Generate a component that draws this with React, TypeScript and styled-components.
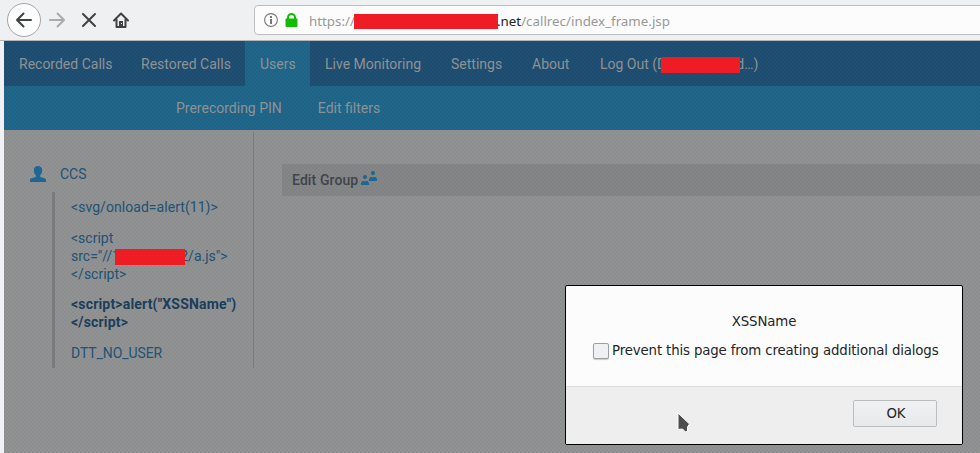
import React from "react";
import styled, { createGlobalStyle } from "styled-components";

const GlobalStyle = createGlobalStyle`
  * { box-sizing: border-box; }
  body { margin: 0; overflow: hidden; background: #eff1f5; }
`;

const Window = styled.div`
  position: relative;
  width: 980px;
  height: 453px;
  overflow: hidden;
  display: flex;
  flex-direction: column;
  background: #eff1f5;
  font: 14px/18px Roboto, sans-serif;
`;

const BrowserBar = styled.header`
  flex: none;
  height: 41px;
  display: flex;
  align-items: flex-start;
  background: #eff0f2;
  border-bottom: 1px solid #b4b6b7;
`;

const BrowserButtons = styled.div`
  width: 254px;
  height: 40px;
  flex: none;
  svg { display: block; }
`;

const AddressBar = styled.div`
  flex: none;
  width: 740px;
  height: 30px;
  margin-top: 5px;
  padding-left: 9px;
  display: flex;
  align-items: center;
  background: #fcfcfc;
  border: 1px solid #bcbebf;
  border-radius: 4px;
  svg { flex: none; }
`;

const Url = styled.div`
  display: flex;
  align-items: center;
  margin-left: 10px;
  padding-top: 2px;
  font: 13.33px/20px "Noto Sans", sans-serif;
  color: #999;
  white-space: pre;
`;

const Scheme = styled.span`
  width: 45px;
`;

const Host = styled.span`
  color: #222;
  margin-left: -1px;
`;

const Redaction = styled.span<{ $w: number; $h: number }>`
  position: relative;
  z-index: 2;
  display: inline-block;
  flex: none;
  width: ${(p) => p.$w}px;
  height: ${(p) => p.$h}px;
  background: #ee1c24;
`;

const Page = styled.main`
  position: relative;
  flex: 1;
  margin-left: 4px;
  background: #929393;
`;

const Dither = styled.div`
  position: absolute;
  inset: 0;
  z-index: 1;
  pointer-events: none;
  background-image:
    conic-gradient(rgba(0, 15, 60, 0.05) 25%, transparent 0 50%, rgba(0, 15, 60, 0.05) 0 75%, transparent 0);
  background-size: 4px 4px;
`;

const Nav = styled.nav`
  display: flex;
  height: 45px;
  background: #1f4f72;
  color: #929596;
`;

const NavItem = styled.a<{ $active?: boolean; $w: number }>`
  width: ${(p) => p.$w}px;
  padding: 14px 0 0 15px;
  white-space: nowrap;
  background: ${(p) => (p.$active ? "#20678a" : "transparent")};
`;

const LogOut = styled(NavItem)`
  display: flex;
  align-items: flex-start;
`;

const NameMask = styled(Redaction)`
  margin: 2px -4px 0 -5px;
`;

const SubNav = styled.nav`
  display: flex;
  gap: 36px;
  height: 44px;
  padding: 13px 0 0 172px;
  background: #20678a;
  color: #929596;
`;

const Columns = styled.div`
  display: flex;
  align-items: flex-start;
`;

const Sidebar = styled.aside`
  width: 250px;
  height: 236px;
  margin-top: 2px;
  border-right: 1px solid #7b7e80;
  color: #235477;
`;

const GroupTitle = styled.div`
  display: flex;
  align-items: center;
  gap: 14px;
  height: 18px;
  margin: 33px 0 9px 26px;
`;

const Tree = styled.ul`
  list-style: none;
  height: 176px;
  margin: 0 0 0 48px;
  padding: 6px 0 0 16px;
  border-left: 3px solid #7a7e81;
`;

const TreeItem = styled.li<{ $selected?: boolean; $tracking?: number }>`
  margin-bottom: 12.5px;
  white-space: nowrap;
  letter-spacing: ${(p) => p.$tracking ?? 0}px;
  font-weight: ${(p) => (p.$selected ? 700 : 400)};
  color: ${(p) => (p.$selected ? "#1c3f5c" : "#235477")};
`;

const Line = styled.div`
  display: flex;
  align-items: center;
  height: 18px;
`;

const HostMask = styled(Redaction)`
  margin: 2px -5px 0 -5px;
`;

const Heading = styled.h2`
  flex: 1;
  display: flex;
  gap: 3px;
  height: 32px;
  margin: 34px 0 0 28px;
  padding: 7px 0 0 10px;
  background: #868787;
  font: 500 14px/18px Roboto, sans-serif;
  letter-spacing: 0.1px;
  color: #3f464c;
`;

const Dialog = styled.section`
  position: absolute;
  z-index: 3;
  left: 565px;
  top: 285px;
  width: 398px;
  height: 160px;
  display: flex;
  flex-direction: column;
  background: #fcfcfc;
  border: 1px solid #000;
  border-radius: 2px;
  overflow: hidden;
  color: #232629;
  font: 13.33px/18px "DejaVu Sans", sans-serif;
  letter-spacing: -0.14px;
`;

const DialogBody = styled.div`
  height: 100px;
  padding-top: 27px;
`;

const Message = styled.div`
  text-align: center;
`;

const CheckRow = styled.label`
  display: flex;
  align-items: center;
  margin: 11px 0 0 27px;
  gap: 3px;
  white-space: nowrap;
`;

const CheckBox = styled.span`
  width: 16px;
  height: 16px;
  border: 1px solid #9c9fa2;
  border-radius: 2px;
  background: #eff0f1;
  box-shadow: 0 1px 1px rgba(0, 0, 0, 0.2);
`;

const DialogFooter = styled.footer`
  flex: 1;
  display: flex;
  justify-content: flex-end;
  padding: 13px 25px 0 0;
  background: #eee;
  border-top: 1px solid #dcdcdc;
`;

const OkButton = styled.button`
  width: 84px;
  height: 27px;
  padding: 1px 0 0 2px;
  border: 1px solid #bbbdbf;
  border-radius: 2px;
  background: linear-gradient(#f1f1f2, #e7e9eb);
  color: inherit;
  font: inherit;
`;

const Pointer = styled.svg`
  position: absolute;
  z-index: 4;
  left: 675px;
  top: 410px;
`;

function BrowserIcons() {
  return (
    <svg width="254" height="40" fill="none" stroke="#3f4142" strokeWidth="2">
      <circle cx="24" cy="20" r="16.5" fill="#fcfcfc" stroke="#a4a6a7" strokeWidth="1" />
      <path d="M31 20H17M23.5 13.5 17 20l6.500 6.500" strokeLinecap="round" strokeLinejoin="round" />
      <path d="M50 20H63M57.5 13.5 64 20l-6.500 6.500" stroke="#aaabac" strokeLinecap="round" strokeLinejoin="round" />
      <path d="m83 14 12 12M95 14 83 26" strokeLinecap="round" />
      <path d="m114 20.500 7-7 7 7M116.500 19v8h9v-8" strokeLinecap="round" strokeLinejoin="round" />
      <path d="M119 21h4v6h-4z" fill="#3f4142" stroke="none" />
      <path d="M121 23h1v1h-1z" fill="#eff0f2" stroke="none" />
    </svg>
  );
}

function SecurityIcons() {
  return (
    <svg width="35" height="20" viewBox="0 0 35 20">
      <circle cx="7" cy="10" r="6.4" fill="none" stroke="#777" strokeWidth="1.1" />
      <path d="M6 6h2v2H6zM6 9h2v5H6z" fill="#777" />
      <path d="M22 8.500H33a1 1 0 0 1 .5 1V16a1 1 0 0 1-1 1H22.500a1 1 0 0 1-1-1v-6.500a1 1 0 0 1 .5-1z" fill="#12bc00" />
      <path d="M24 10V7.500a3.500 3.500 0 0 1 7 0V10" fill="none" stroke="#12bc00" strokeWidth="2" />
    </svg>
  );
}

function PersonIcon() {
  return (
    <svg width="16" height="16" viewBox="0 0 16 16" fill="#216894">
      <path d="M8 0c2.700 0 4.200 1.700 4.200 4.200 0 2.200-.8 4-2 5V11l4.300 1.300c1 .4 1.500 1 1.500 2V16H0v-1.700c0-1 .5-1.600 1.500-2L5.800 11V9.200c-1.200-1-2-2.800-2-5C3.800 1.700 5.300 0 8 0z" />
    </svg>
  );
}

function GroupIcon() {
  return (
    <svg width="17" height="16" viewBox="0 0 17 16" fill="#216894">
      <circle cx="4" cy="6" r="2.100" />
      <circle cx="12" cy="2.100" r="2.100" />
      <path d="M0 13.900v-1.500q0-2 2-2.600 2 1 4 0 2 .6 2 2.600v1.500zM8 9.900V8.400q0-2 2-2.600 2 1 4 0 2 .6 2 2.600v1.500z" />
    </svg>
  );
}

export default function App() {
  return (
    <>
      <GlobalStyle />
      <Window>
        <BrowserBar>
          <BrowserButtons><BrowserIcons /></BrowserButtons>
          <AddressBar>
            <SecurityIcons />
            <Url>
              <Scheme>https://</Scheme><Redaction $w={144} $h={15} /><Host>.net</Host>/callrec/index_frame.jsp
            </Url>
          </AddressBar>
        </BrowserBar>
        <Page>
          <Nav>
            <NavItem $w={122}>Recorded Calls</NavItem>
            <NavItem $w={119}>Restored Calls</NavItem>
            <NavItem $w={65} $active>Users</NavItem>
            <NavItem $w={126}>Live Monitoring</NavItem>
            <NavItem $w={81}>Settings</NavItem>
            <NavItem $w={68}>About</NavItem>
            <LogOut $w={200}>Log Out (D<NameMask $w={79} $h={16} />d…)</LogOut>
          </Nav>
          <SubNav>
            <span>Prerecording PIN</span>
            <span>Edit filters</span>
          </SubNav>
          <Columns>
            <Sidebar>
              <GroupTitle><PersonIcon />CCS</GroupTitle>
              <Tree>
                <TreeItem $tracking={0.05}>{"<svg/onload=alert(11)>"}</TreeItem>
                <TreeItem>
                  <Line>{"<script"}</Line>
                  <Line>{'src="//1'}<HostMask $w={70} $h={16} />{'2/a.js">'}</Line>
                  <Line>{"</script>"}</Line>
                </TreeItem>
                <TreeItem $selected $tracking={0.18}>
                  <Line>{'<script>alert("XSSName")'}</Line>
                  <Line>{"</script>"}</Line>
                </TreeItem>
                <TreeItem $tracking={-0.08}>DTT_NO_USER</TreeItem>
              </Tree>
            </Sidebar>
            <Heading>Edit Group<GroupIcon /></Heading>
          </Columns>
          <Dither />
        </Page>
        <Dialog>
          <DialogBody>
            <Message>XSSName</Message>
            <CheckRow><CheckBox />Prevent this page from creating additional dialogs</CheckRow>
          </DialogBody>
          <DialogFooter><OkButton>OK</OkButton></DialogFooter>
        </Dialog>
        <Pointer width="18" height="24">
          <path d="M3 3v16.500l4.500-.5 3 3 2-1v-4l2-3z" fill="#4d4d4d" stroke="#fff" />
        </Pointer>
      </Window>
    </>
  );
}
